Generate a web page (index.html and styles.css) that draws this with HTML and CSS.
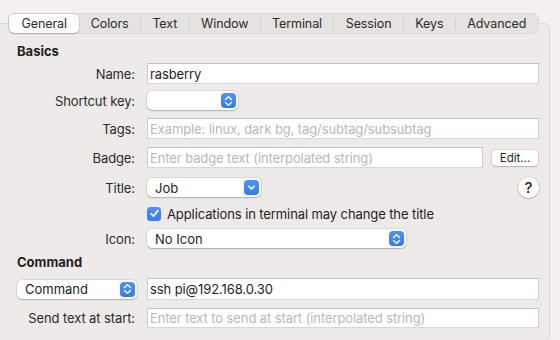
FILE: index.html
```html
<!DOCTYPE html>
<html>
<head>
<meta charset="utf-8">
<link rel="stylesheet" href="styles.css">
</head>
<body>
<div class="window">
  <div class="tabbar">
    <span class="tab selected">General</span>
    <span class="tab">Colors</span>
    <span class="sep"></span>
    <span class="tab">Text</span>
    <span class="sep"></span>
    <span class="tab">Window</span>
    <span class="sep"></span>
    <span class="tab">Terminal</span>
    <span class="sep"></span>
    <span class="tab">Session</span>
    <span class="sep"></span>
    <span class="tab">Keys</span>
    <span class="sep"></span>
    <span class="tab">Advanced</span>
  </div>
  <div class="panel">
    <div class="heading h-basics">Basics</div>

    <div class="row r-name">
      <div class="label">Name:</div>
      <div class="field wide"><span class="value">rasberry</span></div>
    </div>

    <div class="row r-short">
      <div class="label">Shortcut key:</div>
      <div class="popup p-short">
        <span class="ptext"></span>
        <span class="stepper">
          <svg width="9" height="12" viewBox="0 0 9 12"><path d="M1.5 4.5 L4.5 1.8 L7.5 4.5 M1.5 7.5 L4.5 10.2 L7.5 7.5" fill="none" stroke="#fff" stroke-width="1.5" stroke-linecap="round" stroke-linejoin="round"/></svg>
        </span>
      </div>
    </div>

    <div class="row r-tags">
      <div class="label">Tags:</div>
      <div class="field wide"><span class="ph">Example: linux, dark bg, tag/subtag/subsubtag</span></div>
    </div>

    <div class="row r-badge">
      <div class="label">Badge:</div>
      <div class="field badge"><span class="ph">Enter badge text (interpolated string)</span></div>
      <div class="button edit">Edit...</div>
    </div>

    <div class="row r-title">
      <div class="label">Title:</div>
      <div class="popup p-title">
        <span class="ptext">Job</span>
        <span class="stepper sq">
          <svg width="9" height="7" viewBox="0 0 9 7"><path d="M1.8 2.2 L4.5 4.9 L7.2 2.2" fill="none" stroke="#fff" stroke-width="1.6" stroke-linecap="round" stroke-linejoin="round"/></svg>
        </span>
      </div>
      <div class="spacer"></div>
      <div class="help">?</div>
    </div>

    <div class="row r-check">
      <div class="label"></div>
      <span class="checkbox">
        <svg width="11" height="11" viewBox="0 0 11 11"><path d="M2.2 5.8 L4.5 8.2 L8.8 2.6" fill="none" stroke="#fff" stroke-width="1.8" stroke-linecap="round" stroke-linejoin="round"/></svg>
      </span>
      <span class="ctext">Applications in terminal may change the title</span>
    </div>

    <div class="row r-icon">
      <div class="label">Icon:</div>
      <div class="popup p-icon">
        <span class="ptext">No Icon</span>
        <span class="stepper">
          <svg width="9" height="12" viewBox="0 0 9 12"><path d="M1.5 4.5 L4.5 1.8 L7.5 4.5 M1.5 7.5 L4.5 10.2 L7.5 7.5" fill="none" stroke="#fff" stroke-width="1.5" stroke-linecap="round" stroke-linejoin="round"/></svg>
        </span>
      </div>
    </div>

    <div class="heading h-command">Command</div>

    <div class="row r-cmd">
      <div class="popup p-cmd">
        <span class="ptext">Command</span>
        <span class="stepper">
          <svg width="9" height="12" viewBox="0 0 9 12"><path d="M1.5 4.5 L4.5 1.8 L7.5 4.5 M1.5 7.5 L4.5 10.2 L7.5 7.5" fill="none" stroke="#fff" stroke-width="1.5" stroke-linecap="round" stroke-linejoin="round"/></svg>
        </span>
      </div>
      <div class="field wide cmdfield"><span class="value">ssh pi@192.168.0.30</span></div>
    </div>

    <div class="row r-send">
      <div class="label">Send text at start:</div>
      <div class="field wide"><span class="ph">Enter text to send at start (interpolated string)</span></div>
    </div>
  </div>
</div>
</body>
</html>
```
FILE: styles.css
```css
html, body {
  margin: 0;
  padding: 0;
}
body {
  width: 560px;
  height: 340px;
  overflow: hidden;
  background: #f3f0ef;
  font-family: Inter, "Liberation Sans", sans-serif;
  font-size: 13px;
  color: #262626;
}
.window {
  padding-top: 13px;
  display: flex;
  flex-direction: column;
}
.tabbar {
  position: relative;
  z-index: 1;
  align-self: flex-start;
  margin-left: 8px;
  height: 21px;
  box-sizing: border-box;
  display: flex;
  align-items: center;
  background: #e6e2e1;
  border: 1px solid #dcd8d7;
  border-radius: 6px;
}
.tab {
  height: 19px;
  line-height: 19px;
  padding: 0 11.4px;
  color: #2a2a2a;
  font-size: 12.5px;
  letter-spacing: -0.1px;
}
.tab.selected {
  background: #ffffff;
  border-radius: 5px;
  box-shadow: 0 0 0 0.5px rgba(0,0,0,0.12), 0 1px 1.5px rgba(0,0,0,0.18);
  padding: 0 12.5px;
}
.sep {
  width: 1px;
  height: 12px;
  background: #cfcbca;
}
.panel {
  margin-top: -11px;
  margin-left: -20px;
  width: 570px;
  height: 318px;
  box-sizing: border-box;
  background: #edeae9;
  border: 1px solid #dad6d5;
  border-radius: 6px;
  padding-top: 17px;
  padding-left: 20px;
  display: flex;
  flex-direction: column;
}
.heading {
  font-weight: 700;
  height: 16px;
  line-height: 16px;
  margin-left: 16px;
  color: #222;
}
.row {
  display: flex;
  align-items: center;
}
.label {
  width: 134px;
  flex: none;
  text-align: right;
  margin-right: 12px;
  color: #2a2a2a;
  letter-spacing: -0.1px;
}
.field {
  height: 21px;
  box-sizing: border-box;
  background: #fff;
  border: 1px solid #cdcdcd;
  border-top-color: #c2c2c2;
  border-bottom-color: #d6d6d6;
  display: flex;
  align-items: center;
  padding-left: 2px;
  letter-spacing: -0.1px;
}
.field.wide { width: 392px; }
.field.badge { width: 336px; }
.value { color: #1e1e1e; }
.ph { color: #b8b8b8; }

.popup {
  height: 19px;
  box-sizing: border-box;
  background: #fff;
  border-radius: 5px;
  box-shadow: 0 0 0 0.5px rgba(0,0,0,0.14), 0 1px 1.5px rgba(0,0,0,0.2);
  display: flex;
  align-items: center;
  justify-content: space-between;
  padding-left: 8px;
  padding-right: 2px;
}
.ptext { color: #1e1e1e; }
.stepper {
  width: 15px;
  height: 15px;
  border-radius: 4px;
  background: linear-gradient(#4d93fa, #2f7bf4);
  display: flex;
  align-items: center;
  justify-content: center;
}
.p-short { width: 91px; }
.p-title { width: 114px; }
.p-icon { width: 259px; }
.p-cmd { width: 120px; margin-left: 16px; margin-right: 10px; padding-left: 8px; }

.button {
  height: 16px;
  line-height: 16px;
  background: #fff;
  border-radius: 4px;
  box-shadow: 0 0 0 0.5px rgba(0,0,0,0.14), 0 1px 1.5px rgba(0,0,0,0.2);
  font-size: 11.5px;
  text-align: center;
}
.edit { width: 46px; margin-left: 9px; }
.spacer { flex: 1; }
.help {
  width: 21px;
  height: 21px;
  border-radius: 50%;
  background: #fff;
  box-shadow: 0 0 0 0.5px rgba(0,0,0,0.12), 0 1px 2px rgba(0,0,0,0.2);
  display: flex;
  align-items: center;
  justify-content: center;
  font-size: 15px;
  font-weight: 500;
  color: #222;
  margin-right: 10px;
}
.checkbox {
  width: 14px;
  height: 14px;
  border-radius: 3.5px;
  background: linear-gradient(#4d93fa, #2f7bf4);
  display: flex;
  align-items: center;
  justify-content: center;
  margin-right: 6px;
}
.ctext { color: #1e1e1e; letter-spacing: -0.1px; }

.h-basics { margin-top: 2px; }
.r-name { margin-top: 4px; height: 21px; }
.r-short { margin-top: 7px; height: 19px; }
.r-tags { margin-top: 8px; height: 21px; }
.r-badge { margin-top: 8px; height: 21px; }
.r-title { margin-top: 10px; height: 19px; }
.r-check { margin-top: 8px; height: 17px; }
.r-icon { margin-top: 7px; height: 19px; }
.h-command { margin-top: 6px; }
.r-cmd { margin-top: 8px; height: 22px; }
.cmdfield { height: 22px; }
.r-send { margin-top: 8px; height: 20px; }
.r-send .field { height: 20px; }
```
